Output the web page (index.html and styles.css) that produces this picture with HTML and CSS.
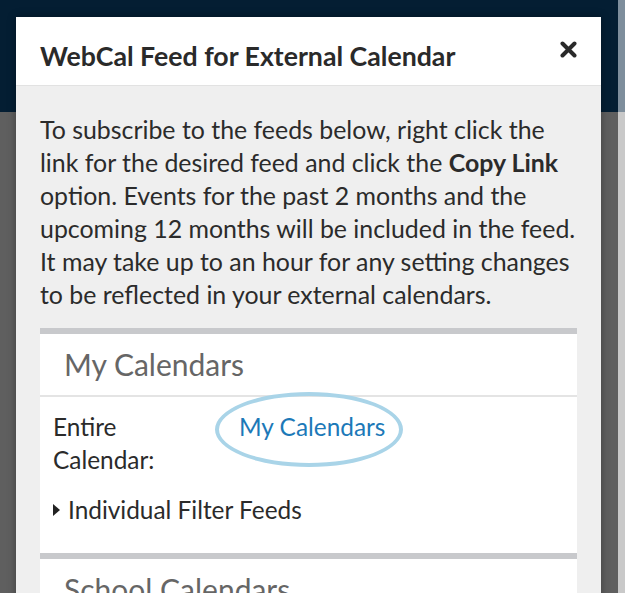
FILE: index.html
```html
<!DOCTYPE html>
<html lang="en">
<head>
<meta charset="utf-8">
<title>WebCal Feed for External Calendar</title>
<link rel="stylesheet" href="styles.css">
</head>
<body>
<div class="scroll-strip"></div>
<div class="modal">
  <div class="modal-header">
    <h1 class="modal-title">WebCal Feed for External Calendar</h1>
    <button class="close" aria-label="Close">
      <svg width="17" height="17" viewBox="0 0 17 17"><path d="M2.5 2.5 L14.5 14.5 M14.5 2.5 L2.5 14.5" stroke="#2a2a2a" stroke-width="4" stroke-linecap="round"/></svg>
    </button>
  </div>
  <div class="modal-body">
    <p class="intro">To subscribe to the feeds below, right click the link for the desired feed and click the <strong>Copy Link</strong> option. Events for the past 2 months and the upcoming 12 months will be included in the feed. It may take up to an hour for any setting changes to be reflected in your external calendars.</p>
    <section class="card">
      <h2 class="card-title">My Calendars</h2>
      <div class="card-body">
        <div class="feed-row">
          <div class="feed-label">Entire<br>Calendar:</div>
          <div class="feed-link-wrap">
            <a class="feed-link" href="#">My Calendars</a>
            <span class="ring"></span>
          </div>
        </div>
        <div class="filter-toggle"><span class="caret"></span>Individual Filter Feeds</div>
      </div>
    </section>
    <section class="card">
      <h2 class="card-title">School Calendars</h2>
    </section>
  </div>
</div>
</body>
</html>
```

FILE: styles.css
```css
html, body {
  margin: 0;
  padding: 0;
  height: 593px;
  overflow: hidden;
}
body {
  background: linear-gradient(to bottom, #041e33 0, #041e33 112px, #5f5f5f 112px, #5f5f5f 100%);
  font-family: Lato, "Open Sans", sans-serif;
  color: #2b2b2b;
  padding: 17px 0 0 16px;
  box-sizing: border-box;
  position: relative;
}
.scroll-strip {
  position: absolute;
  top: 0;
  right: 0;
  width: 7px;
  height: 593px;
  background: linear-gradient(to bottom, #7e8e9c 0, #7e8e9c 112px, #c9c9c9 112px);
}
.modal {
  width: 585px;
  background: #efefef;
  box-shadow: 0 0 8px rgba(0,0,0,0.35);
}
.modal-header {
  background: #fff;
  height: 69px;
  border-bottom: 1px solid #e2e2e2;
  display: flex;
  align-items: center;
  justify-content: space-between;
  padding: 0 24px 0 24px;
  box-sizing: border-box;
}
.modal-title {
  margin: 0;
  font-size: 26.7px;
  font-weight: 700;
  color: #2a2a2a;
  padding-top: 10px;
}
.close {
  border: 0;
  background: none;
  padding: 0;
  width: 17px;
  height: 17px;
  margin-top: -4px;
  display: block;
}
.close svg { display: block; }
.modal-body {
  padding: 27px 24px 0 24px;
}
.intro {
  margin: 0 0 17px 0;
  font-size: 24.9px;
  line-height: 33px;
  color: #2b2b2b;
}
.intro strong { font-weight: 700; }
.card {
  background: #fff;
  border-top: 6px solid #c8c9cc;
}
.card-title {
  margin: 0;
  height: 61px;
  line-height: 61px;
  padding-left: 24px;
  font-size: 30px;
  font-weight: 400;
  color: #666;
  border-bottom: 2px solid #e4e4e4;
}
.card-body {
  padding: 13px 13px 27px 13px;
}
.feed-row {
  display: flex;
  font-size: 24.4px;
  line-height: 33px;
}
.feed-label {
  width: 186px;
  color: #2b2b2b;
}
.feed-link-wrap {
  position: relative;
}
.feed-link {
  color: #1c79b8;
  text-decoration: none;
}
.ring {
  position: absolute;
  left: -24px;
  top: -18px;
  width: 180px;
  height: 67px;
  border: 4px solid #a9d4e8;
  border-radius: 50%;
}
.filter-toggle {
  margin-top: 17px;
  font-size: 24.4px;
  line-height: 33px;
  display: flex;
  align-items: center;
}
.caret {
  display: inline-block;
  width: 0;
  height: 0;
  border-top: 6px solid transparent;
  border-bottom: 6px solid transparent;
  border-left: 7px solid #222;
  margin-right: 8px;
}
```
